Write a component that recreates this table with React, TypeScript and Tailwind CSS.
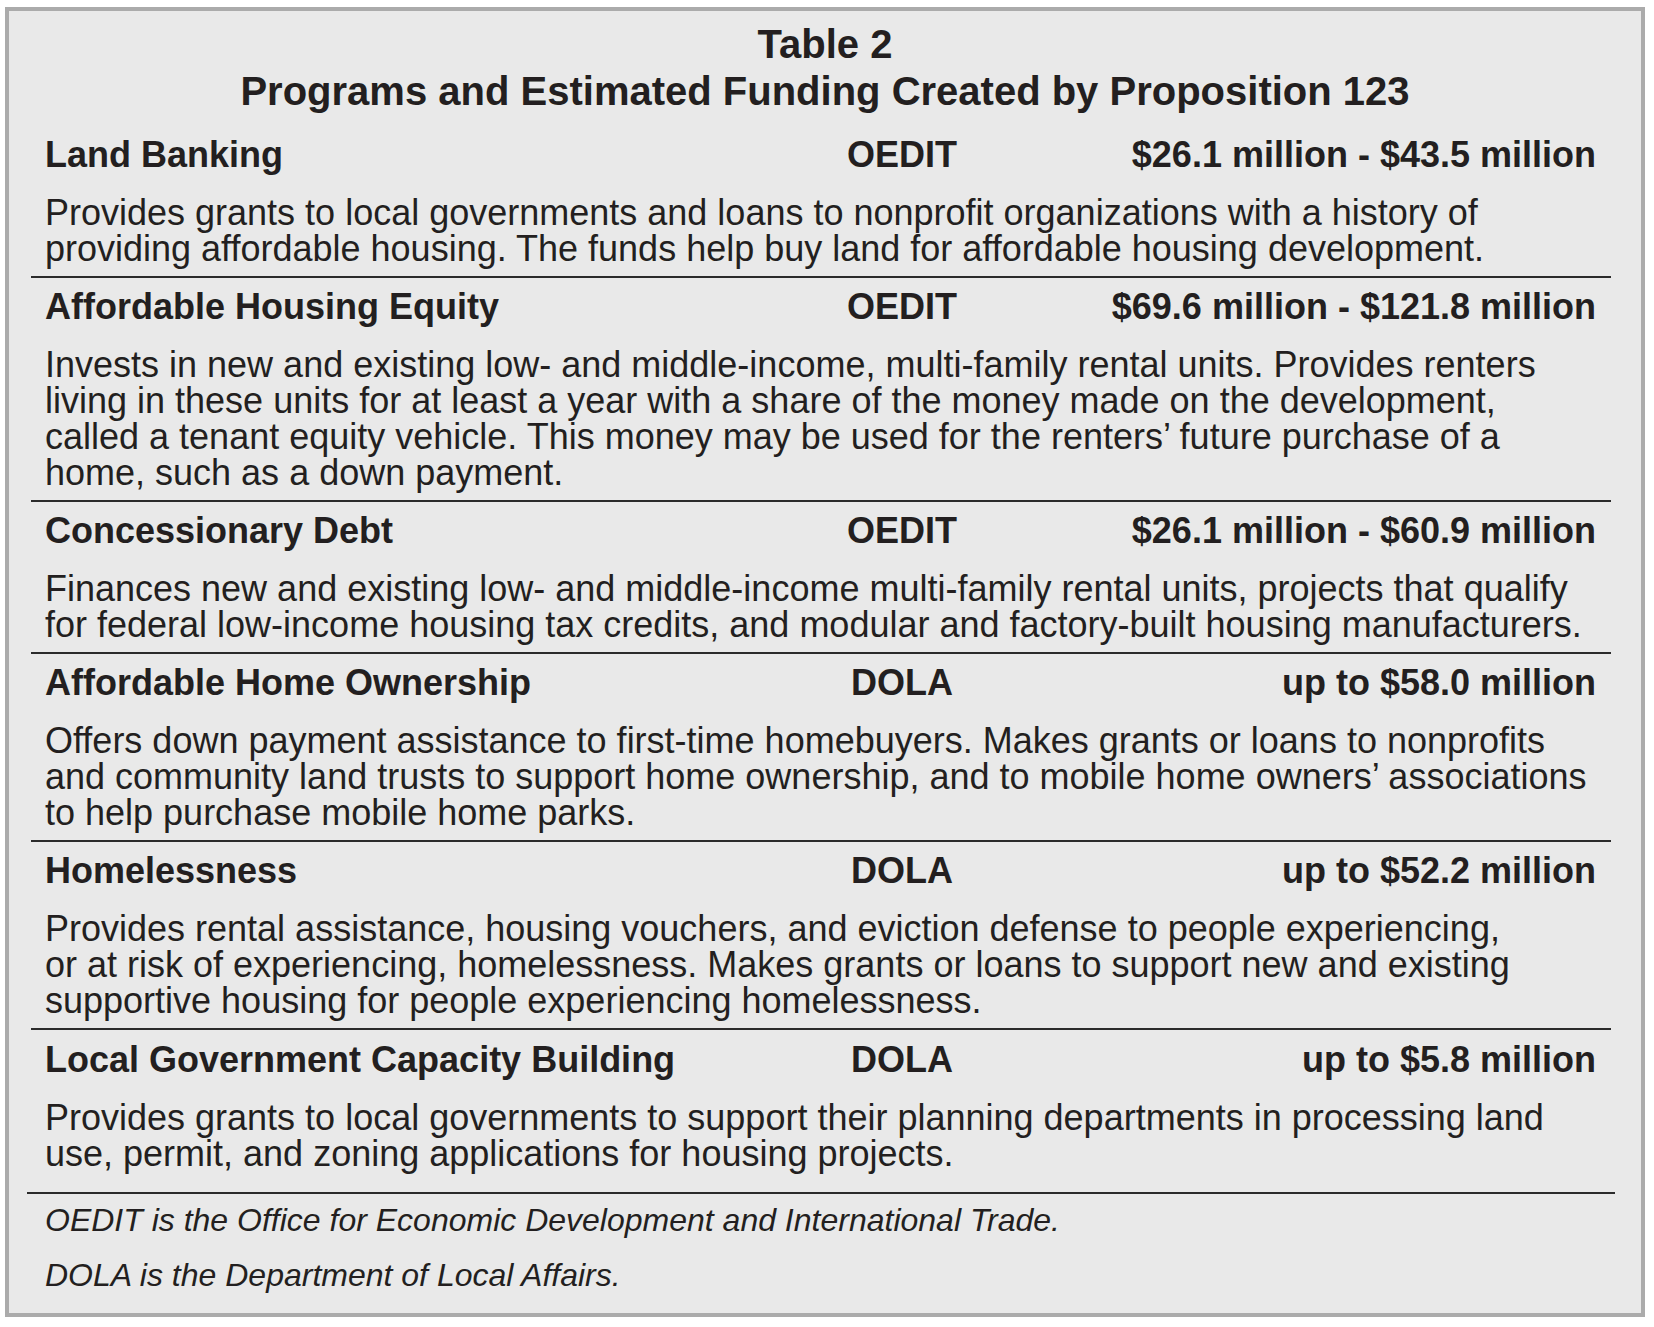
import React from "react";

type Row = {
  name: string;
  agency: string;
  amount: string;
  lines: string[];
};

const rows: Row[] = [
  {
    name: "Land Banking",
    agency: "OEDIT",
    amount: "$26.1 million - $43.5 million",
    lines: [
      "Provides grants to local governments and loans to nonprofit organizations with a history of",
      "providing affordable housing. The funds help buy land for affordable housing development.",
    ],
  },
  {
    name: "Affordable Housing Equity",
    agency: "OEDIT",
    amount: "$69.6 million - $121.8 million",
    lines: [
      "Invests in new and existing low- and middle-income, multi-family rental units. Provides renters",
      "living in these units for at least a year with a share of the money made on the development,",
      "called a tenant equity vehicle. This money may be used for the renters\u2019 future purchase of a",
      "home, such as a down payment.",
    ],
  },
  {
    name: "Concessionary Debt",
    agency: "OEDIT",
    amount: "$26.1 million - $60.9 million",
    lines: [
      "Finances new and existing low- and middle-income multi-family rental units, projects that qualify",
      "for federal low-income housing tax credits, and modular and factory-built housing manufacturers.",
    ],
  },
  {
    name: "Affordable Home Ownership",
    agency: "DOLA",
    amount: "up to $58.0 million",
    lines: [
      "Offers down payment assistance to first-time homebuyers. Makes grants or loans to nonprofits",
      "and community land trusts to support home ownership, and to mobile home owners\u2019 associations",
      "to help purchase mobile home parks.",
    ],
  },
  {
    name: "Homelessness",
    agency: "DOLA",
    amount: "up to $52.2 million",
    lines: [
      "Provides rental assistance, housing vouchers, and eviction defense to people experiencing,",
      "or at risk of experiencing, homelessness. Makes grants or loans to support new and existing",
      "supportive housing for people experiencing homelessness.",
    ],
  },
  {
    name: "Local Government Capacity Building",
    agency: "DOLA",
    amount: "up to $5.8 million",
    lines: [
      "Provides grants to local governments to support their planning departments in processing land",
      "use, permit, and zoning applications for housing projects.",
    ],
  },
];

function RowBlock({ row, last }: { row: Row; last: boolean }) {
  return (
    <div
      className={
        last
          ? "pt-[12px] pb-[20px] pl-[14px] pr-[15px]"
          : "pt-[11px] pb-[9px] pl-[14px] pr-[15px] border-b-2 border-[#2b2b2b]"
      }
    >
      <div className="grid grid-cols-[757px_200px_1fr] text-[36px] font-bold leading-[36px] whitespace-nowrap">
        <div>{row.name}</div>
        <div className="text-center">{row.agency}</div>
        <div className="text-right">{row.amount}</div>
      </div>
      <div className="mt-[22px] text-[36px] leading-[36px]">
        {row.lines.map((l, i) => (
          <div key={i} className="whitespace-nowrap">
            {l}
          </div>
        ))}
      </div>
    </div>
  );
}

export default function App() {
  return (
    <div className="w-[1654px] h-[1327px] bg-white pt-[7px] pl-[5px] font-['Liberation_Sans',Arial,Helvetica,sans-serif] text-[#231f20]">
      <div className="w-[1640px] border-[4px] border-[#ababab] bg-[#e9e9e9]">
        <div className="pt-[10px] mb-[11px] text-center text-[40px] font-bold leading-[47px]">
          <div>Table 2</div>
          <div>Programs and Estimated Funding Created by Proposition 123</div>
        </div>
        <div className="pl-[22px] pr-[30px]">
          {rows.map((r, i) => (
            <RowBlock key={i} row={r} last={i === rows.length - 1} />
          ))}
          <div className="-mx-[4px] h-[2px] bg-[#2b2b2b]" />
          <div className="pl-[14px] pt-[8px] pb-[20px] text-[32px] italic leading-[36px]">
            <div>OEDIT is the Office for Economic Development and International Trade.</div>
            <div className="mt-[19px]">DOLA is the Department of Local Affairs.</div>
          </div>
        </div>
      </div>
    </div>
  );
}
